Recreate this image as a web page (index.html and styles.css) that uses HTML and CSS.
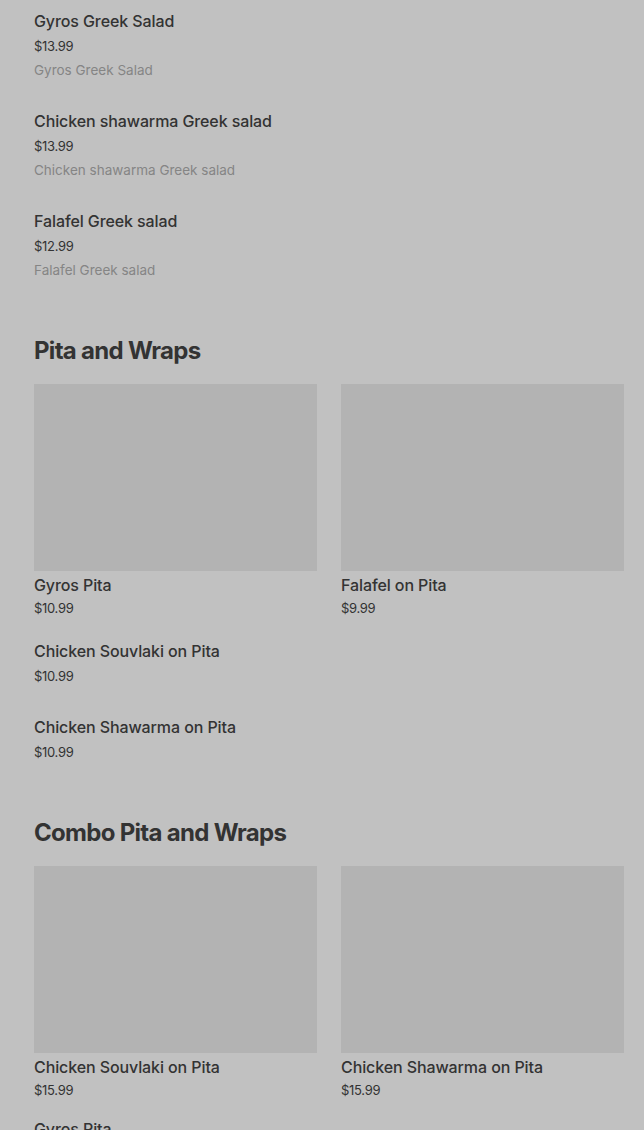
FILE: index.html
```html
<!DOCTYPE html>
<html lang="en">
  <head>
    <meta charset="UTF-8" />
    <meta name="viewport" content="width=device-width, initial-scale=1.0" />
    <title>Menu</title>
    <link rel="stylesheet" href="styles.css">
  </head>
  <body>
    <div class="menu">
      <!-- Salads (tail of the section) -->
      <ul class="item-list">
        <li class="list-item">
          <div class="item-title">Gyros Greek Salad</div>
          <div class="item-price">$13.99</div>
          <div class="item-desc">Gyros Greek Salad</div>
        </li>
        <li class="list-item">
          <div class="item-title">Chicken shawarma Greek salad</div>
          <div class="item-price">$13.99</div>
          <div class="item-desc">Chicken shawarma Greek salad</div>
        </li>
        <li class="list-item">
          <div class="item-title">Falafel Greek salad</div>
          <div class="item-price">$12.99</div>
          <div class="item-desc">Falafel Greek salad</div>
        </li>
      </ul>

      <section class="section">
        <h2 class="section-title">Pita and Wraps</h2>
        <div class="card-grid">
          <div class="card">
            <div class="card-img"></div>
            <div class="card-title">Gyros Pita</div>
            <div class="card-price">$10.99</div>
          </div>
          <div class="card">
            <div class="card-img"></div>
            <div class="card-title">Falafel on Pita</div>
            <div class="card-price">$9.99</div>
          </div>
        </div>
        <div class="plain-item">
          <div class="item-title">Chicken Souvlaki on Pita</div>
          <div class="plain-price">$10.99</div>
        </div>
        <div class="plain-item">
          <div class="item-title">Chicken Shawarma on Pita</div>
          <div class="plain-price">$10.99</div>
        </div>
      </section>

      <section class="section combo">
        <h2 class="section-title">Combo Pita and Wraps</h2>
        <div class="card-grid">
          <div class="card">
            <div class="card-img"></div>
            <div class="card-title">Chicken Souvlaki on Pita</div>
            <div class="card-price">$15.99</div>
          </div>
          <div class="card">
            <div class="card-img"></div>
            <div class="card-title">Chicken Shawarma on Pita</div>
            <div class="card-price">$15.99</div>
          </div>
        </div>
        <div class="plain-item">
          <div class="item-title">Gyros Pita</div>
          <div class="plain-price">$15.99</div>
        </div>
      </section>
    </div>
  </body>
</html>
```

FILE: styles.css
```css
body {
  margin: 0;
  background: #c1c1c1;
  color: #333;
  font-family: Inter, "Noto Sans", sans-serif;
}

.menu {
  padding: 0 20px 0 34px;
}

.item-list {
  list-style: none;
  margin: 0;
  padding: 0;
}
.list-item {
  padding: 9px 0 19px;
}

.item-title {
  font-size: 16px;
  font-weight: 500;
  line-height: 24px;
  letter-spacing: -0.1px;
}
.item-price {
  padding-top: 1px;
  font-size: 13px;
  line-height: 24px;
  letter-spacing: -0.3px;
}
.item-desc {
  margin-bottom: -1px;
  font-size: 13.5px;
  line-height: 24px;
  color: #858585;
}

.section-title {
  margin: 35px 0 17px;
  font-size: 24px;
  font-weight: 700;
  line-height: 32px;
  letter-spacing: -0.7px;
}
.combo .section-title {
  margin-top: 46px;
}

.card-grid {
  display: grid;
  grid-template-columns: 1fr 1fr;
  column-gap: 24px;
}
.card-img {
  height: 187px;
  background: #b3b3b3;
}
.card-title {
  margin-top: 2px;
  font-size: 16px;
  font-weight: 500;
  line-height: 24px;
  letter-spacing: -0.1px;
}
.card-price {
  font-size: 13px;
  line-height: 22px;
  letter-spacing: -0.3px;
}

.plain-item {
  padding: 20px 0 6px;
}
.combo .plain-item {
  padding-top: 16px;
}
.plain-price {
  font-size: 13px;
  line-height: 26px;
  letter-spacing: -0.3px;
}
```
